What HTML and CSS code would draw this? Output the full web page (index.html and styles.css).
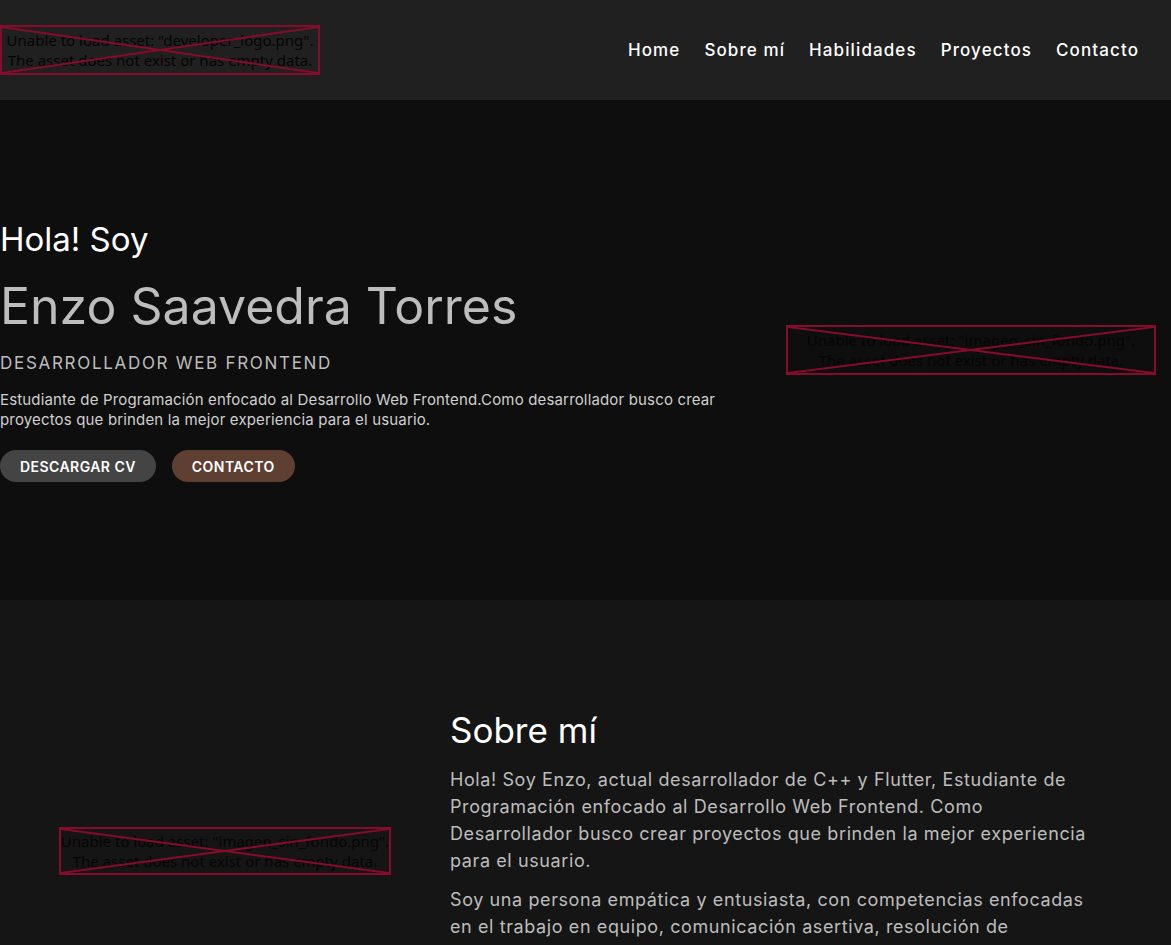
FILE: index.html
```html
<!DOCTYPE html>
<html lang="es">
<head>
<meta charset="utf-8">
<title>Enzo Saavedra Torres</title>
<link rel="stylesheet" href="styles.css">
</head>
<body>
<header class="header">
  <div class="broken broken-logo">
    <svg class="broken-x" viewBox="0 0 100 100" preserveAspectRatio="none"><line x1="0" y1="0" x2="100" y2="100"/><line x1="100" y1="0" x2="0" y2="100"/></svg>
    <span class="broken-text">Unable to load asset: "developer_logo.png".<br>The asset does not exist or has empty data.</span>
  </div>
  <nav class="nav">
    <a class="nav-link">Home</a>
    <a class="nav-link">Sobre mí</a>
    <a class="nav-link">Habilidades</a>
    <a class="nav-link">Proyectos</a>
    <a class="nav-link">Contacto</a>
  </nav>
</header>

<section class="hero">
  <div class="hero-left">
    <h2 class="hero-hello">Hola! Soy</h2>
    <h1 class="hero-name">Enzo Saavedra Torres</h1>
    <p class="hero-role">DESARROLLADOR WEB FRONTEND</p>
    <p class="hero-desc">Estudiante de Programación enfocado al Desarrollo Web Frontend.Como desarrollador busco crear proyectos que brinden la mejor experiencia para el usuario.</p>
    <div class="hero-buttons">
      <a class="btn btn-cv">DESCARGAR CV</a>
      <a class="btn btn-contact">CONTACTO</a>
    </div>
  </div>
  <div class="hero-right">
    <div class="broken broken-hero">
      <svg class="broken-x" viewBox="0 0 100 100" preserveAspectRatio="none"><line x1="0" y1="0" x2="100" y2="100"/><line x1="100" y1="0" x2="0" y2="100"/></svg>
      <span class="broken-text">Unable to load asset: "imagen_sin_fondo.png".<br>The asset does not exist or has empty data.</span>
    </div>
  </div>
</section>

<section class="about">
  <div class="about-left">
    <div class="broken broken-about">
      <svg class="broken-x" viewBox="0 0 100 100" preserveAspectRatio="none"><line x1="0" y1="0" x2="100" y2="100"/><line x1="100" y1="0" x2="0" y2="100"/></svg>
      <span class="broken-text">Unable to load asset: "imagen_sin_fondo.png".<br>The asset does not exist or has empty data.</span>
    </div>
  </div>
  <div class="about-right">
    <h2 class="about-title">Sobre mí</h2>
    <p class="about-text">Hola! Soy Enzo, actual desarrollador de C++ y Flutter, Estudiante de Programación enfocado al Desarrollo Web Frontend. Como Desarrollador busco crear proyectos que brinden la mejor experiencia para el usuario.</p>
    <p class="about-text">Soy una persona empática y entusiasta, con competencias enfocadas en el trabajo en equipo, comunicación asertiva, resolución de problemas y aprendizaje continuo, siempre buscando mejorar mis habilidades.</p>
  </div>
</section>
</body>
</html>
```

FILE: styles.css
```css
* { box-sizing: border-box; }
html, body { margin: 0; padding: 0; }
body {
  background: #151515;
  font-family: Inter, "Noto Sans", sans-serif;
  color: #ffffff;
  overflow: hidden;
}
h1, h2, p { margin: 0; font-weight: 400; }

.header {
  height: 100px;
  background: #202020;
  display: flex;
  align-items: center;
  justify-content: space-between;
  padding-right: 32px;
}
.nav { display: flex; gap: 24px; }
.nav-link {
  font-size: 17px;
  font-weight: 500;
  letter-spacing: 1.1px;
  color: #ffffff;
}

.broken {
  position: relative;
  border: 2px solid #850c2a;
  display: flex;
  align-items: center;
  justify-content: center;
  text-align: center;
}
.broken-x {
  position: absolute;
  inset: 0;
  width: 100%;
  height: 100%;
}
.broken-x line { stroke: #850c2a; stroke-width: 2; vector-effect: non-scaling-stroke; }
.broken-text {
  font-family: "Noto Sans", sans-serif;
  font-size: 15px;
  line-height: 20px;
  color: #050505;
  white-space: nowrap;
}
.broken-logo { width: 320px; height: 50px; }
.broken-hero { width: 370px; height: 50px; }
.broken-about { width: 332px; height: 48px; }

.hero {
  height: 500px;
  background: #0e0e0e;
  display: flex;
  align-items: flex-start;
}
.hero-left { flex: 1; padding-top: 118px; }
.hero-right {
  width: 400px;
  align-self: center;
  display: flex;
  justify-content: center;
}
.hero-hello { font-size: 33px; line-height: 42px; color: #ffffff; }
.hero-name {
  font-size: 50px;
  line-height: 64px;
  color: #bdbdbd;
  margin-top: 14px;
}
.hero-role {
  font-size: 17px;
  line-height: 21px;
  letter-spacing: 1.7px;
  color: #bdbdbd;
  margin-top: 15px;
}
.hero-desc {
  font-size: 15px;
  line-height: 20px;
  letter-spacing: 0.16px;
  color: #d0d0d0;
  max-width: 740px;
  margin-top: 16px;
}
.hero-buttons { display: flex; gap: 16px; margin-top: 20px; }
.btn {
  height: 32px;
  display: flex;
  align-items: center;
  padding: 0 20px;
  border-radius: 16px;
  font-size: 14px;
  font-weight: 600;
  letter-spacing: 0.45px;
  color: #ffffff;
}
.btn-cv { background: #444444; }
.btn-contact { background: #603f33; }

.about {
  display: flex;
  padding-top: 108px;
}
.about-left {
  width: 450px;
  display: flex;
  align-items: center;
  justify-content: center;
}
.about-right { width: 648px; }
.about-title { font-size: 35px; line-height: 44px; color: #ffffff; }
.about-text {
  font-size: 18px;
  line-height: 27px;
  letter-spacing: 0.6px;
  color: #bdbdbd;
  margin-top: 14px;
}
.about-text + .about-text { margin-top: 12px; }
```
